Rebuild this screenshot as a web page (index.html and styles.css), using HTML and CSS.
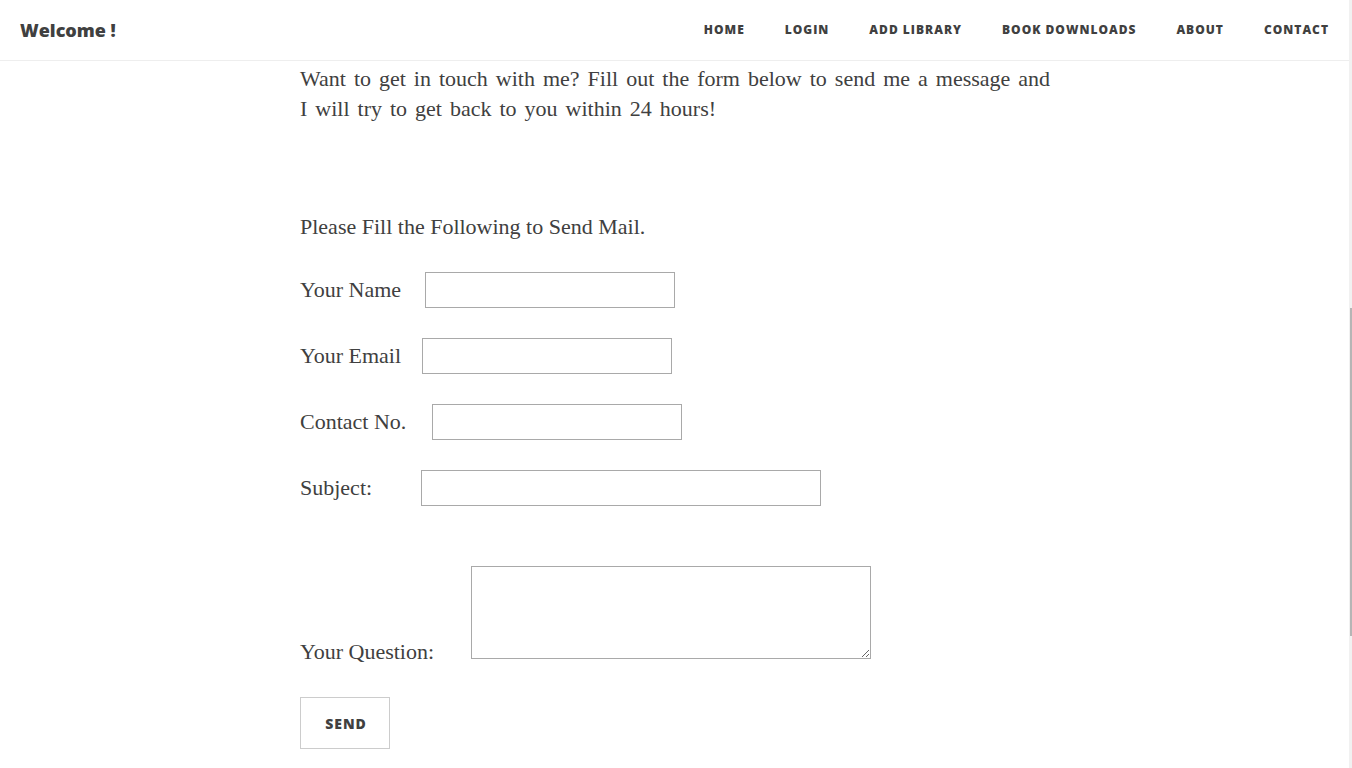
FILE: index.html
```html
<!DOCTYPE html>
<html lang="en">
<head>
<meta charset="utf-8">
<title>Contact</title>
<link rel="stylesheet" href="styles.css">
</head>
<body>
<header class="navbar">
  <a class="brand" href="#">Welcome !</a>
  <nav>
    <ul class="nav-links">
      <li><a href="#">Home</a></li>
      <li><a href="#">Login</a></li>
      <li><a href="#">Add Library</a></li>
      <li><a href="#">Book Downloads</a></li>
      <li><a href="#">About</a></li>
      <li><a href="#">Contact</a></li>
    </ul>
  </nav>
</header>

<main class="container">
  <p class="intro">Want to get in touch with me? Fill out the form below to send me a message and I will try to get back to you within 24 hours!</p>

  <form class="mail-form">
    <p class="form-title">Please Fill the Following to Send Mail.</p>

    <div class="row">
      <label class="lbl lbl-name" for="name">Your Name</label>
      <input class="field" id="name" type="text">
    </div>
    <div class="row">
      <label class="lbl lbl-email" for="email">Your Email</label>
      <input class="field" id="email" type="email">
    </div>
    <div class="row">
      <label class="lbl lbl-contact" for="contact">Contact No.</label>
      <input class="field" id="contact" type="text">
    </div>
    <div class="row">
      <label class="lbl lbl-subject" for="subject">Subject:</label>
      <input class="field field-wide" id="subject" type="text">
    </div>
    <div class="row-question">
      <label class="lbl lbl-question" for="question">Your Question:</label><textarea class="question" id="question"></textarea>
    </div>
    <button class="send" type="button">Send</button>
  </form>
</main>

<div class="scrollbar"><div class="thumb"></div></div>
</body>
</html>
```
FILE: styles.css
```css
html, body {
  margin: 0;
  padding: 0;
  background: #fff;
}

body {
  font-family: "Liberation Serif", "Times New Roman", serif;
  font-size: 22px;
  color: #404040;
  overflow: hidden;
}

.navbar {
  height: 60px;
  border-bottom: 1px solid #eeeeee;
  display: flex;
  align-items: center;
  justify-content: space-between;
  padding: 0 3px 0 20px;
  font-family: "Open Sans", "Liberation Sans", sans-serif;
}

.brand {
  font-size: 18px;
  font-weight: 800;
  color: #404040;
  text-decoration: none;
}

.nav-links {
  display: flex;
  list-style: none;
  margin: 0;
  padding: 0;
}

.nav-links a {
  display: block;
  padding: 0 20px;
  font-size: 12px;
  font-weight: 800;
  letter-spacing: 1px;
  text-transform: uppercase;
  color: #404040;
  text-decoration: none;
  line-height: 20px;
}

.container {
  width: 752px;
  margin: 0 auto;
}

.intro {
  margin: 3px 0 0;
  line-height: 30px;
  word-spacing: 2.5px;
}

.mail-form {
  margin-top: 88px;
}

.form-title {
  margin: 0 0 30px;
  line-height: 30px;
}

.row {
  display: flex;
  align-items: center;
  height: 36px;
  margin-bottom: 30px;
}

.lbl {
  display: inline-block;
  flex: none;
  line-height: 30px;
}

.lbl-name { width: 125px; }
.lbl-email { width: 122px; }
.lbl-contact { width: 132px; }
.lbl-subject { width: 121px; }
.lbl-question { width: 171px; }

.field {
  box-sizing: border-box;
  width: 250px;
  height: 36px;
  border: 1px solid #a9a9a9;
  margin: 0;
  padding: 0 6px;
  background: #fff;
  font: inherit;
}

.field-wide {
  width: 400px;
}

.row-question {
  margin-top: 60px;
  line-height: 30px;
}

.question {
  box-sizing: border-box;
  width: 400px;
  height: 93px;
  border: 1px solid #a9a9a9;
  margin: 0;
  padding: 2px;
  vertical-align: baseline;
  font: inherit;
}

.send {
  display: block;
  margin-top: 30px;
  box-sizing: border-box;
  width: 90px;
  height: 52px;
  padding: 0 0 0 2px;
  background: #fff;
  border: 1px solid #cccccc;
  border-radius: 0;
  font-family: "Open Sans", "Liberation Sans", sans-serif;
  font-size: 14px;
  font-weight: 800;
  letter-spacing: 1px;
  text-transform: uppercase;
  color: #404040;
}

.scrollbar {
  position: fixed;
  top: 0;
  right: 0;
  width: 3px;
  height: 100%;
  background: #f1f1f1;
}

.thumb {
  position: absolute;
  top: 308px;
  left: 1px;
  width: 2px;
  height: 328px;
  background: #b5b5b5;
}
```
